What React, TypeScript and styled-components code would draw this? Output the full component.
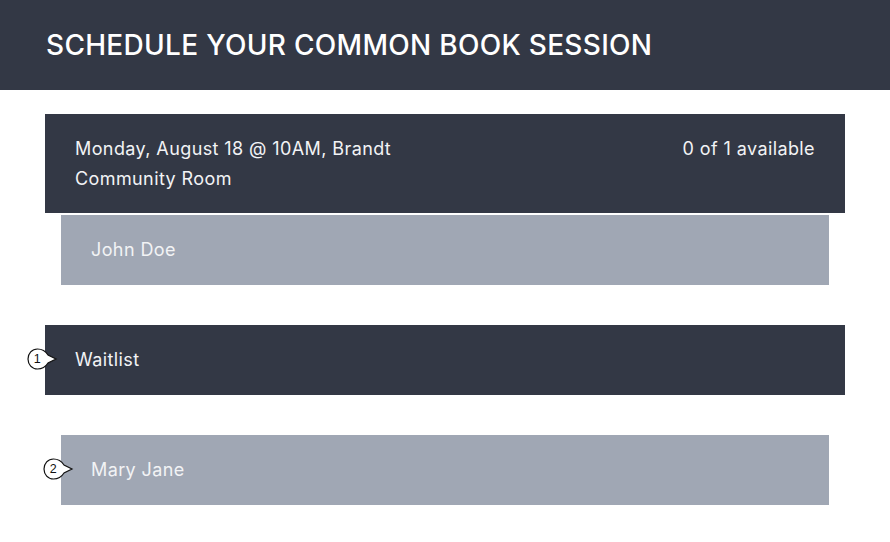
import React from "react";
import styled, { createGlobalStyle } from "styled-components";

const Global = createGlobalStyle`
  html, body { margin: 0; padding: 0; background: #ffffff; }
  body { font-family: "Inter", "Noto Sans", sans-serif; -webkit-font-smoothing: antialiased; }
`;

const Page = styled.div`
  width: 890px;
  min-height: 542px;
  background: #ffffff;
`;

const Header = styled.header`
  height: 90px;
  background: #333845;
  display: flex;
  align-items: center;
  padding: 0 46px;
  box-sizing: border-box;
`;

const Title = styled.h1`
  margin: 0;
  color: #ffffff;
  font-size: 28px;
  font-weight: 500;
  letter-spacing: 0.3px;
  text-transform: uppercase;
`;

const Content = styled.main`
  padding: 24px 45px 0;
  display: flex;
  flex-direction: column;
`;

const Bar = styled.div<{ $tone: "dark" | "light"; $indent?: boolean; $gap?: number }>`
  position: relative;
  box-sizing: border-box;
  margin: ${(p) => (p.$gap ?? 0)}px ${(p) => (p.$indent ? 16 : 0)}px 0;
  background: ${(p) => (p.$tone === "dark" ? "#333845" : "#a0a7b4")};
  color: #f2f3f5;
  height: 70px;
  padding: 0 30px 2px;
  display: flex;
  align-items: center;
  font-size: 18px;
  letter-spacing: 0.4px;
`;

const SessionCard = styled.div`
  box-sizing: border-box;
  background: #333845;
  color: #f2f3f5;
  padding: 20px 30px 19px;
  display: flex;
  justify-content: space-between;
  align-items: flex-start;
  font-size: 18px;
  letter-spacing: 0.4px;
  line-height: 30px;
`;

const SessionInfo = styled.div`
  max-width: 350px;
`;

const Availability = styled.div`
  white-space: nowrap;
`;

const Marker = styled.svg`
  position: absolute;
  left: -18px;
  top: 50%;
  margin-top: -13px;
  width: 31px;
  height: 24px;
  overflow: visible;
`;

const Callout = ({ n }: { n: number }) => (
  <Marker viewBox="0 0 31 24">
    <path
      d="M10.5 2 C15.5 2 19 4.8 21 8 L29 12 L21 16 C19 19.2 15.5 22 10.5 22 C5 22 1 17.5 1 12 C1 6.5 5 2 10.5 2 Z"
      fill="#ffffff"
      stroke="#111111"
      strokeWidth="1.2"
    />
    <text
      x="10.5"
      y="16.3"
      textAnchor="middle"
      fontSize="12.5"
      fontWeight="500"
      fontFamily="Liberation Sans, Arial, sans-serif"
      fill="#111111"
    >
      {n}
    </text>
  </Marker>
);

export default function App() {
  return (
    <Page>
      <Global />
      <Header>
        <Title>Schedule your common book session</Title>
      </Header>
      <Content>
        <SessionCard>
          <SessionInfo>Monday, August 18 @ 10AM, Brandt Community Room</SessionInfo>
          <Availability>0 of 1 available</Availability>
        </SessionCard>
        <Bar $tone="light" $indent $gap={2}>John Doe</Bar>
        <Bar $tone="dark" $gap={40}>
          <Callout n={1} />
          Waitlist
        </Bar>
        <Bar $tone="light" $indent $gap={40}>
          <Callout n={2} />
          Mary Jane
        </Bar>
      </Content>
    </Page>
  );
}
